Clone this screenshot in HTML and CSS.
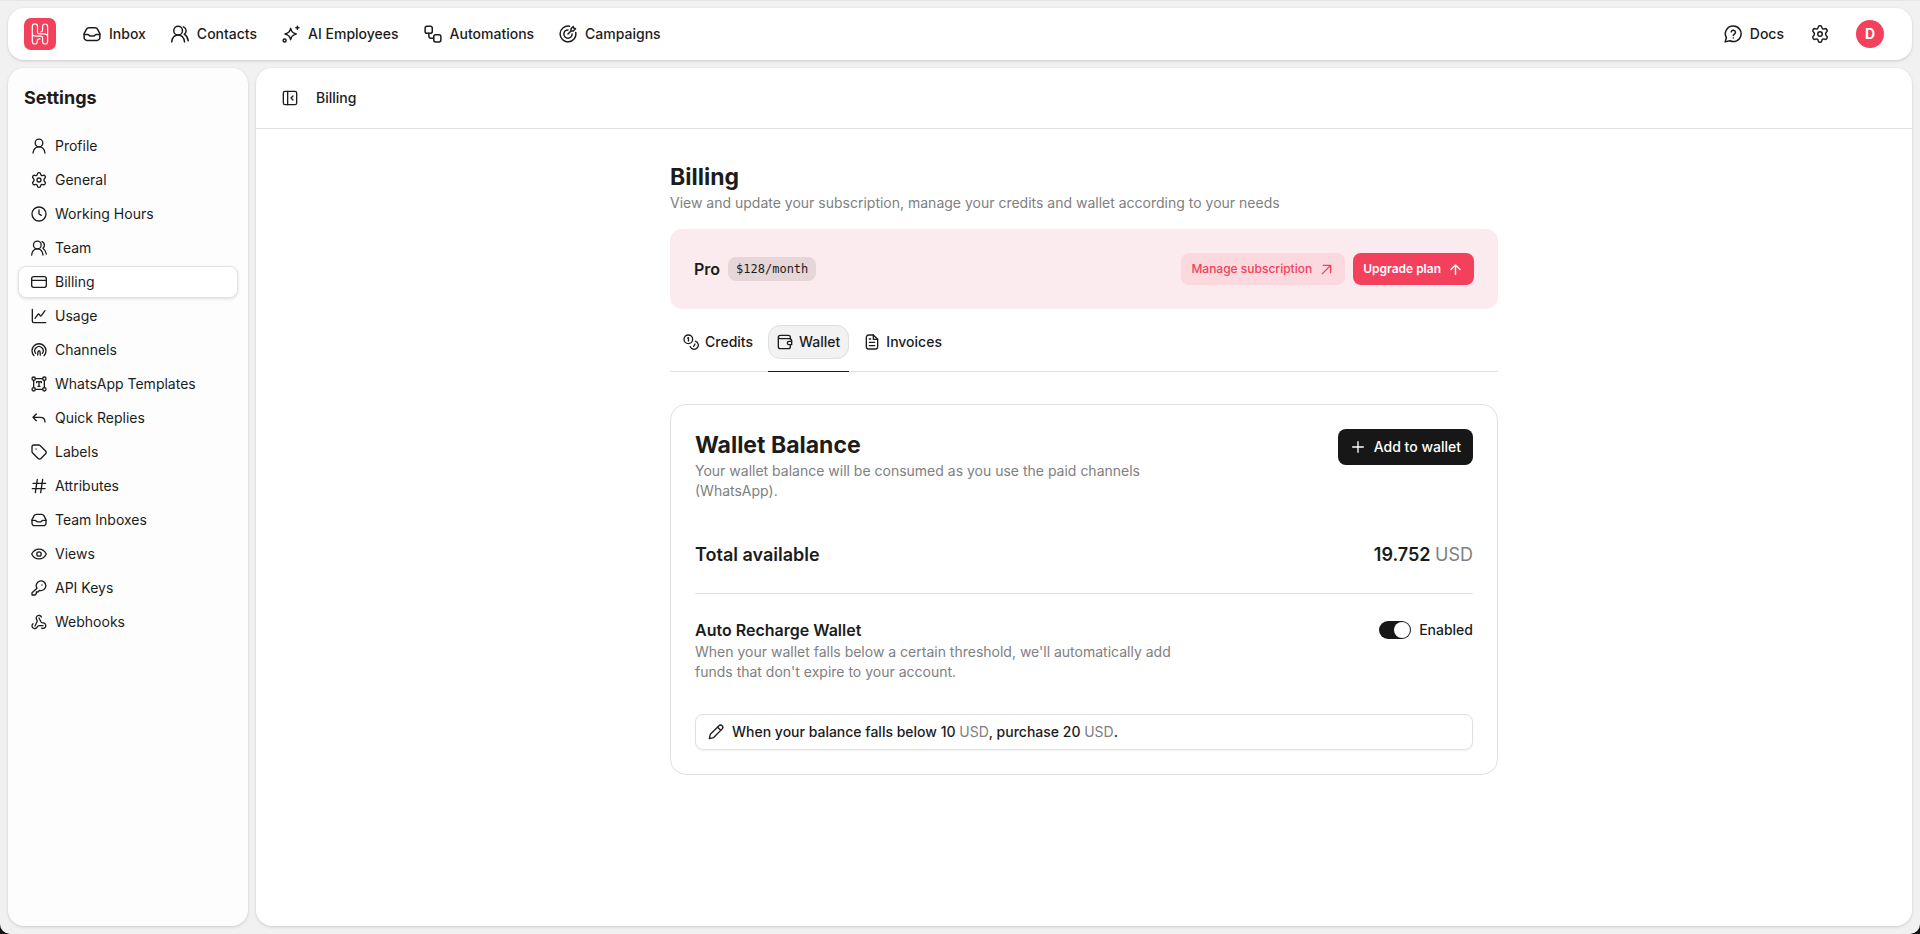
FILE: index.html
```html
<!DOCTYPE html>
<html lang="en">

<head>
    <meta charset="UTF-8">
    <meta name="viewport" content="width=device-width, initial-scale=1.0">
    <title>Billing</title>
    <link rel="stylesheet" href="styles.css">
</head>

<body>
    <!-- icon sprite -->
    <svg class="sprite" aria-hidden="true">
        <symbol id="i-inbox" viewBox="0 0 24 24"><path d="M8 3.500h8c1.700 0 2.600.5 3.300 1.900l3.200 6.100v5.200a3.800 3.800 0 0 1-3.800 3.800H5.300a3.800 3.800 0 0 1-3.800-3.800v-5.200l3.200-6.100C5.400 4 6.300 3.500 8 3.500z" /><path d="M1.500 12.500h4.600c.8 0 1.500.4 1.900 1.100.4.800 1.100 1.200 1.900 1.200h4.200c.8 0 1.500-.4 1.900-1.200.4-.7 1.100-1.100 1.900-1.100h4.600" /></symbol>
        <symbol id="i-user" viewBox="0 0 24 24"><circle cx="12" cy="7.500" r="5.700" /><path d="M3 22.500c.6-5.200 3.800-9.300 9-9.300s8.400 4.100 9 9.300" /></symbol>
        <symbol id="i-users" viewBox="0 0 24 24"><circle cx="9.500" cy="7.500" r="5.800" /><path d="M1 22.500c.6-5.400 3.300-9.200 8.500-9.200s7.900 3.800 8.500 9.200M16.500 2.500a5.600 5.600 0 0 1 1.300 9.800c2.600 1.700 4.500 4.700 5.200 8.700" /></symbol>
        <symbol id="i-sparkles" viewBox="0 0 24 24"><path d="M11.500 4.500c1 4.700 2.500 6.200 7.500 7.500-5 1.300-6.500 2.800-7.500 7.500-1-4.700-2.500-6.200-7.500-7.500 5-1.300 6.500-2.800 7.500-7.500z" /><path d="M20.500 1.500v4M18.500 3.500h4" /><circle cx="3.500" cy="20.500" r="2" /></symbol>
        <symbol id="i-flow" viewBox="0 0 24 24"><rect x="1.500" y="1.500" width="9.500" height="9.500" rx="2.500" /><rect x="13" y="13" width="9.500" height="9.500" rx="2.500" /><path d="M6.500 11v3.500a3 3 0 0 0 3 3H13" /></symbol>
        <symbol id="i-target" viewBox="0 0 24 24"><path d="M14 1.700a10.500 10.500 0 1 0 8.300 8.300M12 6.500a5.500 5.500 0 1 0 5.500 5.500M12 12l4-4M16 8V5l3-3 .8 2.200L22 5l-3 3z" /></symbol>
        <symbol id="i-help" viewBox="0 0 24 24"><path d="M12.500 1.500a10.300 10.300 0 1 1-4.600 19.500L1.500 22.500l1.700-5.500A10.300 10.300 0 0 1 12.500 1.500z" /><path d="M9.600 9.200a2.900 2.900 0 0 1 5.700.8c0 1.900-2.900 2.200-2.900 4M12.400 17.300v.1" /></symbol>
        <symbol id="i-gear" viewBox="0 0 24 24"><path d="M12.220 1h-.44a2.300 2.300 0 0 0-2.200 2c-.1 1-.5 1.700-1.200 2.100-.7.400-1.500.4-2.400 0a2.300 2.300 0 0 0-2.900.8l-.4.700a2.300 2.300 0 0 0 .7 3c.8.600 1.200 1.500 1.200 2.400s-.4 1.800-1.200 2.400a2.300 2.300 0 0 0-.7 3l.4.700c.6.900 1.900 1.300 2.900.8.900-.4 1.700-.4 2.400 0 .7.4 1.100 1.100 1.200 2.100.1 1.100 1.100 2 2.200 2h.44c1.100 0 2.100-.9 2.200-2 .1-1 .5-1.700 1.200-2.100.7-.4 1.500-.4 2.400 0 1 .5 2.300.1 2.900-.8l.4-.7c.6-1 .3-2.300-.7-3-.8-.6-1.200-1.500-1.200-2.400s.4-1.800 1.200-2.400c1-.7 1.300-2 .7-3l-.4-.7a2.300 2.300 0 0 0-2.900-.8c-.9.400-1.700.4-2.400 0-.7-.4-1.100-1.100-1.200-2.100a2.300 2.300 0 0 0-2.200-2z" /><circle cx="12" cy="12" r="3" /></symbol>
        <symbol id="i-panel" viewBox="0 0 24 24"><rect x="2" y="2" width="20" height="20" rx="2.500" /><path d="M8.500 2v20M16.500 9l-3 3 3 3" /></symbol>
        <symbol id="i-clock" viewBox="0 0 24 24"><circle cx="12" cy="12" r="10.500" /><path d="M12 6v6l3.500 2" /></symbol>
        <symbol id="i-card" viewBox="0 0 24 24"><rect x="1" y="4" width="22" height="16" rx="3" /><path d="M1 9.500h22" /></symbol>
        <symbol id="i-chart" viewBox="0 0 24 24"><path d="M2 2v17.500A2.500 2.500 0 0 0 4.500 22H22M6 15.500l4.200-5.700c.8-1 1.600-1 2.300 0l1 1.400c.8 1 1.600 1 2.300 0L21 4" /></symbol>
        <symbol id="i-signal" viewBox="0 0 24 24"><path d="M4.500 20.500a10.500 10.500 0 1 1 15 0M7 17a6.300 6.300 0 1 1 10 0" /><path d="M10 19.500l.5-5c.3-1.300 2.700-1.300 3 0l.5 5" /></symbol>
        <symbol id="i-template" viewBox="0 0 24 24"><circle cx="4" cy="4" r="2.500" /><circle cx="20" cy="4" r="2.500" /><circle cx="4" cy="20" r="2.500" /><circle cx="20" cy="20" r="2.500" /><path d="M6.500 4h11M6.500 20h11M4 6.500v11M20 6.500v11M8.500 10V8.500h7V10M12 8.500v7M10.500 15.500h3" /></symbol>
        <symbol id="i-reply" viewBox="0 0 24 24"><path d="M8 6l-5 5 5 5M3 11h11c4.500 0 7 2.500 7 7" /></symbol>
        <symbol id="i-tag" viewBox="0 0 24 24"><path d="M1.500 4.500v6.800c0 .8.300 1.500.9 2.100l8.300 8.300c1.200 1.200 3 1.200 4.200 0l7-7c1.200-1.200 1.200-3 0-4.200l-8.300-8.100c-.6-.6-1.300-.9-2.100-.9h-7a3 3 0 0 0-3 3z" /><path d="M7.500 7.500v.1" /></symbol>
        <symbol id="i-hash" viewBox="0 0 24 24"><path d="M9.500 2l-3 20M17.500 2l-3 20M3 8h19M2 16h19" /></symbol>
        <symbol id="i-eye" viewBox="0 0 24 24"><path d="M1 12c2.500-4.800 6.200-7.300 11-7.300s8.500 2.500 11 7.300c-2.500 4.800-6.200 7.300-11 7.300S3.500 16.800 1 12z" /><circle cx="12" cy="12" r="3.300" /></symbol>
        <symbol id="i-key" viewBox="0 0 24 24"><path d="M9 12.500A7.200 7.200 0 1 1 13 15.500L10.500 18H8v2.500L6 22.500H1.500V19z" /><path d="M16.500 7.500v.1" /></symbol>
        <symbol id="i-webhook" viewBox="0 0 24 24"><path d="M18 17.500h-6c-1.100 0-1.900.9-2.400 1.800A4.200 4.200 0 1 1 3 14.500M6 18l3.100-6.300c.5-1 .1-2.200-.5-3.100a4.100 4.100 0 1 1 7-4.200M12 6l3.100 6c.6 1 1.800 1.300 2.900 1.300a4.200 4.200 0 1 1-2 7.900" /></symbol>
        <symbol id="i-coins" viewBox="0 0 24 24"><circle cx="8" cy="8" r="6.500" /><path d="M7 6.200l1.200-.7v5M18.500 10.800a6.200 6.200 0 1 1-7.700 7.700M18 15l-2 3.500" /></symbol>
        <symbol id="i-wallet" viewBox="0 0 24 24"><path d="M20 8V5a3 3 0 0 0-3-3H5a3 3 0 0 0-3 3v14a3 3 0 0 0 3 3h12a3 3 0 0 0 3-3v-3M2 4.500A2.500 2.500 0 0 0 4.500 7H19a3 3 0 0 1 3 3v1" /><path d="M22 11h-4a2.500 2.500 0 0 0 0 5h4z" /></symbol>
        <symbol id="i-file" viewBox="0 0 24 24"><path d="M14 1.500H7A3.500 3.500 0 0 0 3.500 5v14A3.500 3.500 0 0 0 7 22.500h10a3.500 3.500 0 0 0 3.500-3.500V8z" /><path d="M8 7.500h2M8 12.500h8M8 17.500h8M14 1.500V8h6.500" /></symbol>
        <symbol id="i-up-right" viewBox="0 0 24 24"><path d="M3 21L21 3M5 3h16v16" /></symbol>
        <symbol id="i-up" viewBox="0 0 24 24"><path d="M12 23V2M2 12L12 2l10 10" /></symbol>
        <symbol id="i-plus" viewBox="0 0 24 24"><path d="M12 4v16M4 12h16" /></symbol>
        <symbol id="i-pencil" viewBox="0 0 24 24"><path d="M2 22l1.500-6.500L16.500 2.700a2.700 2.700 0 0 1 4.800 4.600L8.500 20.300z" /><path d="M14.500 5l4.500 4.500" /></symbol>
    </svg>

    <header class="topbar">
        <a href="#" class="logo" aria-label="Home">
            <svg viewBox="0 0 32 32"><path d="M13.500 14V8.500a2.600 2.600 0 0 0-5.200 0V15c0 2 1.200 3.200 3.200 3.200h5.300c1.200 0 1.800.6 1.800 1.800v3.500a2.500 2.500 0 0 0 5 0V8.500a2.500 2.500 0 0 0-5 0V12c0 1.200-.6 1.800-1.800 1.800M13.500 14c0 1.200.6 1.800 1.800 1.800h4.500c2 0 3.800 1 3.800 3M8.300 16v7.500a2.500 2.500 0 0 0 5 0c0-1.500-.3-2.700 2.700-2.700" /></svg>
        </a>
        <nav class="topnav">
            <a href="#"><svg class="icon"><use href="#i-inbox" /></svg>Inbox</a>
            <a href="#"><svg class="icon"><use href="#i-users" /></svg>Contacts</a>
            <a href="#"><svg class="icon"><use href="#i-sparkles" /></svg>AI Employees</a>
            <a href="#"><svg class="icon"><use href="#i-flow" /></svg>Automations</a>
            <a href="#"><svg class="icon"><use href="#i-target" /></svg>Campaigns</a>
        </nav>
        <div class="topnav topnav-right">
            <a href="#"><svg class="icon"><use href="#i-help" /></svg>Docs</a>
            <a href="#" aria-label="Settings"><svg class="icon"><use href="#i-gear" /></svg></a>
            <button type="button" class="avatar">D</button>
        </div>
    </header>

    <div class="layout">
        <aside class="sidebar">
            <h2>Settings</h2>
            <nav class="menu">
                <a href="#"><svg class="icon"><use href="#i-user" /></svg>Profile</a>
                <a href="#"><svg class="icon"><use href="#i-gear" /></svg>General</a>
                <a href="#"><svg class="icon"><use href="#i-clock" /></svg>Working Hours</a>
                <a href="#"><svg class="icon"><use href="#i-users" /></svg>Team</a>
                <a href="#" class="active"><svg class="icon"><use href="#i-card" /></svg>Billing</a>
                <a href="#"><svg class="icon"><use href="#i-chart" /></svg>Usage</a>
                <a href="#"><svg class="icon"><use href="#i-signal" /></svg>Channels</a>
                <a href="#"><svg class="icon"><use href="#i-template" /></svg>WhatsApp Templates</a>
                <a href="#"><svg class="icon"><use href="#i-reply" /></svg>Quick Replies</a>
                <a href="#"><svg class="icon"><use href="#i-tag" /></svg>Labels</a>
                <a href="#"><svg class="icon"><use href="#i-hash" /></svg>Attributes</a>
                <a href="#"><svg class="icon"><use href="#i-inbox" /></svg>Team Inboxes</a>
                <a href="#"><svg class="icon"><use href="#i-eye" /></svg>Views</a>
                <a href="#"><svg class="icon"><use href="#i-key" /></svg>API Keys</a>
                <a href="#"><svg class="icon"><use href="#i-webhook" /></svg>Webhooks</a>
            </nav>
        </aside>

        <main class="main">
            <div class="main-header">
                <button type="button" class="btn-panel" aria-label="Close sidebar"><svg class="icon"><use href="#i-panel" /></svg></button>
                <span>Billing</span>
            </div>

            <div class="content">
                <h1>Billing</h1>
                <p class="muted">View and update your subscription, manage your credits and wallet according to your needs</p>

                <section class="plan">
                    <strong class="plan-name">Pro</strong>
                    <span class="price">$128/month</span>
                    <div class="plan-actions">
                        <button type="button" class="btn btn-soft">Manage subscription<svg class="icon"><use href="#i-up-right" /></svg></button>
                        <button type="button" class="btn btn-red">Upgrade plan<svg class="icon"><use href="#i-up" /></svg></button>
                    </div>
                </section>

                <nav class="tabs">
                    <a href="#" class="tab"><span><svg class="icon"><use href="#i-coins" /></svg>Credits</span></a>
                    <a href="#" class="tab selected"><span><svg class="icon"><use href="#i-wallet" /></svg>Wallet</span></a>
                    <a href="#" class="tab"><span><svg class="icon"><use href="#i-file" /></svg>Invoices</span></a>
                </nav>

                <section class="card">
                    <div class="row">
                        <div class="row-text">
                            <h2>Wallet Balance</h2>
                            <p class="muted">Your wallet balance will be consumed as you use the paid channels (WhatsApp).</p>
                        </div>
                        <button type="button" class="btn btn-dark"><svg class="icon"><use href="#i-plus" /></svg>Add to wallet</button>
                    </div>
                    <div class="row total">
                        <span>Total available</span>
                        <span>19.752 <span class="unit">USD</span></span>
                    </div>
                    <div class="row">
                        <div class="row-text">
                            <h3>Auto Recharge Wallet</h3>
                            <p class="muted">When your wallet falls below a certain threshold, we'll automatically add funds that don't expire to your account.</p>
                        </div>
                        <label class="switch" for="recharge">
                            <input type="checkbox" id="recharge" name="recharge" checked>
                            Enabled
                        </label>
                    </div>
                    <button type="button" class="rule">
                        <svg class="icon"><use href="#i-pencil" /></svg>
                        <span>When your balance falls below 10 <span class="unit">USD</span>, purchase 20 <span class="unit">USD</span>.</span>
                    </button>
                </section>
            </div>
        </main>
    </div>
</body>

</html>
```
FILE: styles.css
```css
* {
    margin: 0;
    padding: 0;
    box-sizing: border-box;
}

html {
    background-color: #111111;
}

body {
    display: flex;
    flex-direction: column;
    gap: 8px;
    min-height: 100vh;
    padding: 7px 8px 8px;
    border-top: 1px solid #e6e6e6;
    border-radius: 0 0 10px 10px;
    background-color: #f1f1f1;
    color: #1c1c1c;
    font-family: Inter, 'Liberation Sans', sans-serif;
    font-size: 14px;
    line-height: 20px;
}

a {
    color: inherit;
    text-decoration: none;
}

button {
    border: none;
    background: none;
    color: inherit;
    font: inherit;
    cursor: pointer;
}

.sprite {
    display: none;
}

.icon {
    flex: none;
    width: 16px;
    height: 16px;
    fill: none;
    stroke: currentColor;
    stroke-width: 2;
    stroke-linecap: round;
    stroke-linejoin: round;
}

/* top bar */
.topbar {
    display: flex;
    align-items: center;
    height: 52px;
    padding: 0 28px 0 16px;
    border-radius: 16px;
    background-color: #ffffff;
    box-shadow: 0 1px 3px rgba(0, 0, 0, 0.16);
}

.logo {
    width: 32px;
    height: 32px;
    margin-right: 27px;
    border-radius: 7px;
    background-color: #f2405d;
}

.logo svg {
    display: block;
    fill: none;
    stroke: #ffffff;
    stroke-width: 1.2;
    stroke-linecap: round;
}

.topnav {
    display: flex;
    align-items: center;
    gap: 25px;
    font-weight: 500;
}

.topnav a {
    display: flex;
    align-items: center;
    gap: 8px;
}

.topnav .icon {
    width: 18px;
    height: 18px;
}

.topnav-right {
    gap: 27px;
    margin-left: auto;
}

.avatar {
    width: 28px;
    height: 28px;
    border-radius: 50%;
    background-color: #f2405d;
    color: #ffffff;
    font-weight: 700;
}

.layout {
    display: flex;
    flex: 1;
    gap: 8px;
}

/* settings menu */
.sidebar {
    flex: none;
    width: 240px;
    padding: 16px 10px;
    border-radius: 16px;
    background-color: #fdfdfd;
    box-shadow: 0 1px 3px rgba(0, 0, 0, 0.16);
}

.sidebar h2 {
    padding: 0 6px;
    font-size: 18px;
    font-weight: 700;
    line-height: 28px;
}

.menu {
    display: flex;
    flex-direction: column;
    gap: 2px;
    margin-top: 18px;
}

.menu a {
    display: flex;
    align-items: center;
    gap: 8px;
    height: 32px;
    padding: 0 12px;
    border: 1px solid transparent;
    border-radius: 8px;
}

.menu .active {
    border-color: #e2e2e2;
    background-color: #ffffff;
    box-shadow: 0 1px 3px rgba(0, 0, 0, 0.12);
}

/* main panel */
.main {
    flex: 1;
    border-radius: 16px;
    background-color: #ffffff;
    box-shadow: 0 1px 3px rgba(0, 0, 0, 0.16);
}

.main-header {
    display: flex;
    align-items: center;
    gap: 18px;
    height: 61px;
    padding: 0 26px;
    border-bottom: 1px solid #e0e0e0;
    font-weight: 500;
}

.btn-panel {
    display: flex;
}

.content {
    max-width: 828px;
    margin: 0 auto;
    padding: 32px 0;
}

h1,
.card h2 {
    font-size: 23px;
    font-weight: 700;
    line-height: 32px;
}

.muted,
.unit {
    color: #808080;
}

.unit {
    font-weight: 400;
}

.btn {
    display: flex;
    align-items: center;
    border-radius: 8px;
    font-weight: 600;
}

.plan {
    display: flex;
    align-items: center;
    gap: 8px;
    margin: 16px 0;
    padding: 24px;
    border-radius: 12px;
    background-color: #fcebee;
}

.plan-name {
    font-size: 16px;
    font-weight: 600;
}

.price {
    padding: 2px 8px;
    border-radius: 8px;
    background-color: #e6d6d8;
    font-family: 'DejaVu Sans Mono', monospace;
    font-size: 12px;
}

.plan-actions {
    display: flex;
    gap: 8px;
    margin-left: auto;
}

.plan-actions .btn {
    gap: 9px;
    height: 32px;
    padding: 0 13px 0 10px;
    font-size: 12px;
}

.plan-actions .icon {
    width: 11px;
    height: 11px;
    stroke-width: 3;
}

.plan-actions .btn-soft {
    background-color: #fbd9de;
    color: #f2405d;
    font-weight: 500;
}

.btn-red {
    background-color: #f2405d;
    color: #ffffff;
}

.tabs {
    display: flex;
    gap: 6px;
    padding-left: 4px;
    border-bottom: 1px solid #e0e0e0;
    font-weight: 500;
}

.tab {
    margin-bottom: -1px;
    padding-bottom: 12px;
    border-bottom: 1px solid transparent;
}

.tab span {
    display: flex;
    align-items: center;
    gap: 6px;
    height: 34px;
    padding: 0 8px;
    border: 1px solid transparent;
    border-radius: 12px;
}

.selected {
    border-color: #1c1c1c;
}

.selected span {
    border-color: #dfdfdf;
    background-color: #f2f2f2;
}

/* wallet card */
.card {
    margin-top: 32px;
    padding: 24px;
    border: 1px solid #e0e0e0;
    border-radius: 16px;
}

.row {
    display: flex;
    align-items: flex-start;
    justify-content: space-between;
}

.row-text {
    max-width: 480px;
}

.btn-dark {
    gap: 8px;
    height: 36px;
    padding: 0 12px;
    background-color: #171717;
    color: #ffffff;
    font-weight: 500;
}

.total {
    margin: 40px 0 24px;
    padding-bottom: 24px;
    border-bottom: 1px solid #e0e0e0;
    font-size: 18px;
    font-weight: 600;
    line-height: 28px;
}

h3 {
    font-size: 16px;
    font-weight: 600;
    line-height: 24px;
}

.switch {
    display: flex;
    align-items: center;
    gap: 8px;
    line-height: 24px;
    font-weight: 500;
}

.switch input {
    appearance: none;
    display: flex;
    justify-content: flex-end;
    width: 32px;
    height: 18px;
    padding: 1px;
    border-radius: 9px;
    background-color: #171717;
}

.switch input::before {
    content: "";
    width: 16px;
    height: 16px;
    border-radius: 50%;
    background-color: #ffffff;
}

.rule {
    display: flex;
    align-items: center;
    gap: 8px;
    width: 100%;
    height: 36px;
    margin-top: 32px;
    padding: 0 12px;
    border: 1px solid #e0e0e0;
    border-radius: 8px;
    box-shadow: 0 1px 2px rgba(0, 0, 0, 0.05);
    font-weight: 500;
}
```
